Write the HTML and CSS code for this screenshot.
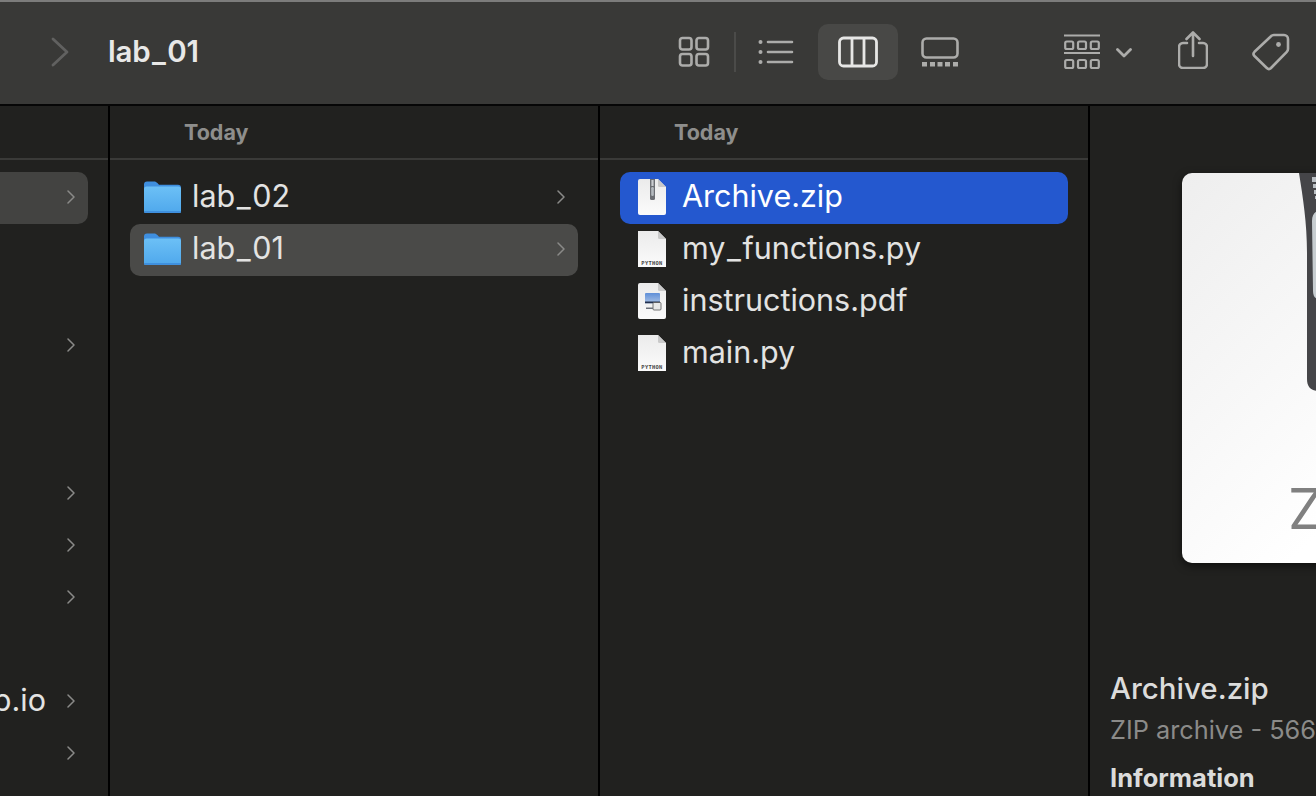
FILE: index.html
```html
<!DOCTYPE html>
<html lang="en">
<head>
<meta charset="utf-8">
<title>lab_01</title>
<link rel="stylesheet" href="styles.css">
</head>
<body>
<svg class="defs" width="0" height="0" aria-hidden="true">
  <defs>
    <linearGradient id="fold" x1="0" y1="0" x2="0" y2="1"><stop offset="0" stop-color="#6cc0f6"/><stop offset="1" stop-color="#4fa8ec"/></linearGradient>
    <linearGradient id="page" x1="0" y1="0" x2="0" y2="1"><stop offset="0" stop-color="#ebebeb"/><stop offset="1" stop-color="#fbfbfb"/></linearGradient>
    <linearGradient id="sky" x1="0" y1="0" x2="0" y2="1"><stop offset="0" stop-color="#5f8fd8"/><stop offset="1" stop-color="#c4d4ea"/></linearGradient>
    <symbol id="folder" viewBox="0 0 37 32">
      <path d="M0 3.500C0 1.500 1 .5 3 .5h7c1.600 0 2.400.6 3.400 1.600L15 3.800h19c2 0 3 1 3 3V10H0z" fill="#3f8fdf"/>
      <rect x="0" y="5.500" width="37" height="26.500" rx="2.600" fill="url(#fold)"/>
      <rect x="0" y="30" width="37" height="2" rx="1" fill="#3f90de"/>
    </symbol>
    <symbol id="zip" viewBox="0 0 28 36">
      <path d="M2 0h18l8 8v26a2 2 0 0 1-2 2H2a2 2 0 0 1-2-2V2a2 2 0 0 1 2-2z" fill="url(#page)"/>
      <path d="M20 0l8 8h-6.500a1.500 1.500 0 0 1-1.500-1.500z" fill="#c9c9c9"/>
      <path d="M12 0h5v19.500a1.500 1.500 0 0 1-1.500 1.500h-2a1.500 1.500 0 0 1-1.500-1.500z" fill="#6b6e73"/>
      <rect x="13.400" y="1" width="2.200" height="6" fill="#c9ccd0"/>
      <rect x="13.200" y="8" width="2.600" height="9" rx="1.200" fill="#b4babf"/>
    </symbol>
    <symbol id="py" viewBox="0 0 28 36">
      <path d="M0 0h20l8 8v28H0z" fill="url(#page)"/>
      <path d="M20 0l8 8h-6.500a1.500 1.500 0 0 1-1.500-1.500z" fill="#c9c9c9"/>
      <text x="14" y="33.500" text-anchor="middle" class="pytext">PYTHON</text>
    </symbol>
    <symbol id="pdf" viewBox="0 0 28 36">
      <path d="M2 0h18l8 8v26a2 2 0 0 1-2 2H2a2 2 0 0 1-2-2V2a2 2 0 0 1 2-2z" fill="url(#page)"/>
      <path d="M20 0l8 8h-6.500a1.500 1.500 0 0 1-1.500-1.500z" fill="#c9c9c9"/>
      <rect x="7" y="10" width="15" height="14" rx="1" fill="url(#sky)"/>
      <rect x="7" y="18.500" width="15" height="2" fill="#23304d"/>
      <rect x="7" y="20.500" width="10" height="3.500" fill="#f2f2f2"/>
      <rect x="15" y="19.500" width="8" height="7.500" rx="1" fill="#e8e8e8" stroke="#555" stroke-width=".8"/>
      <rect x="8" y="24.500" width="7" height="1.500" fill="#6a6f78"/>
    </symbol>
    <symbol id="chev" viewBox="0 0 8 14">
      <path d="M1 1l6 6-6 6" fill="none" stroke="#8a8a88" stroke-width="1.500" stroke-linecap="round" stroke-linejoin="round"/>
    </symbol>
  </defs>
</svg>

<header class="toolbar">
  <div class="nav-slot">
    <svg class="ic-back" width="18" height="30" viewBox="0 0 18 30"><path d="M2 2l14 13L2 28" fill="none" stroke="#616160" stroke-width="2.800" stroke-linecap="round" stroke-linejoin="round"/></svg>
  </div>
  <h1 class="title">lab<span class="us">_</span>01</h1>

  <div class="view-slot">
    <svg width="32" height="32" viewBox="0 0 32 32" class="ic"><rect x="2" y="2" width="11.500" height="11.500" rx="2.500"/><rect x="18.500" y="2" width="11.500" height="11.500" rx="2.500"/><rect x="2" y="18" width="11.500" height="11.500" rx="2.500"/><rect x="18.500" y="18" width="11.500" height="11.500" rx="2.500"/></svg>
  </div>
  <div class="view-sep"></div>
  <div class="view-slot">
    <svg width="36" height="26" viewBox="0 0 36 26" class="ic"><circle cx="2.500" cy="3" r="2" class="solid"/><circle cx="2.500" cy="13" r="2" class="solid"/><circle cx="2.500" cy="23" r="2" class="solid"/><path d="M10 3h24M10 13h24M10 23h24" stroke-linecap="round"/></svg>
  </div>
  <div class="view-slot view-on">
    <svg width="40" height="32" viewBox="0 0 40 32" class="ic ic-on"><rect x="1.500" y="2" width="37" height="28" rx="4"/><path d="M14 2v28M26 2v28"/></svg>
  </div>
  <div class="view-slot view-last">
    <svg width="38" height="30" viewBox="0 0 38 30" class="ic"><rect x="1.500" y="1.500" width="35" height="19" rx="4"/><path class="solid" d="M1 25h5v4.500H1zM9 25h5v4.500H9zM16.500 25h5v4.500h-5zM24 25h5v4.500h-5zM32 25h5v4.500h-5z"/></svg>
  </div>

  <div class="group-btn">
    <svg width="36" height="36" viewBox="0 0 36 36" class="ic ic-thin"><path d="M0 1.500h36M0 19h36"/><rect x="1.200" y="7.500" width="8" height="7.500" rx="1.500"/><rect x="14" y="7.500" width="8" height="7.500" rx="1.500"/><rect x="26.800" y="7.500" width="8" height="7.500" rx="1.500"/><rect x="1.200" y="26" width="8" height="8" rx="1.500"/><rect x="14" y="26" width="8" height="8" rx="1.500"/><rect x="26.800" y="26" width="8" height="8" rx="1.500"/></svg>
    <svg width="16" height="10" viewBox="0 0 16 10" class="ic ic-caret"><path d="M1.500 1.500L8 8l6.500-6.500" stroke-linecap="round" stroke-linejoin="round"/></svg>
  </div>
  <svg width="30" height="38" viewBox="0 0 30 38" class="ic ic-share"><path d="M9 12H5a4 4 0 0 0-4 4v17a4 4 0 0 0 4 4h20a4 4 0 0 0 4-4V16a4 4 0 0 0-4-4h-4" stroke-linecap="round"/><path d="M15 25V2M8.500 8L15 1.500 21.500 8" stroke-linecap="round" stroke-linejoin="round"/></svg>
  <svg width="38" height="38" viewBox="0 0 38 38" class="ic ic-tag"><path d="M22 2h10a4 4 0 0 1 4 4v10a4 4 0 0 1-1.200 2.800L19 35a3 3 0 0 1-4.200 0L2.500 23a3 3 0 0 1 0-4.200L19 3.200A4 4 0 0 1 22 2z" stroke-linejoin="round"/><circle cx="26.500" cy="11.500" r="2.400" class="solid"/></svg>
</header>

<main class="browser">
  <section class="col col-first">
    <div class="col-head"></div>
    <div class="rows">
      <div class="row row-side row-current"><span class="label"></span><svg class="chev"><use href="#chev"/></svg></div>
      <div class="group">
        <div class="row row-side"><span class="label"></span><svg class="chev"><use href="#chev"/></svg></div>
      </div>
      <div class="group">
        <div class="row row-side"><span class="label"></span><svg class="chev"><use href="#chev"/></svg></div>
        <div class="row row-side"><span class="label"></span><svg class="chev"><use href="#chev"/></svg></div>
        <div class="row row-side"><span class="label"></span><svg class="chev"><use href="#chev"/></svg></div>
        <div class="row row-side"><span class="label"></span></div>
        <div class="row row-side"><span class="label">lab.github.io</span><svg class="chev"><use href="#chev"/></svg></div>
        <div class="row row-side"><span class="label"></span><svg class="chev"><use href="#chev"/></svg></div>
      </div>
    </div>
  </section>

  <section class="col">
    <div class="col-head"><span class="head-text">Today</span></div>
    <div class="rows">
      <div class="row"><span class="slot slot-folder"><svg class="i-folder"><use href="#folder"/></svg></span><span class="label">lab<span class="us">_</span>02</span><svg class="chev"><use href="#chev"/></svg></div>
      <div class="row row-parent"><span class="slot slot-folder"><svg class="i-folder"><use href="#folder"/></svg></span><span class="label">lab<span class="us">_</span>01</span><svg class="chev"><use href="#chev"/></svg></div>
    </div>
  </section>

  <section class="col">
    <div class="col-head"><span class="head-text">Today</span></div>
    <div class="rows">
      <div class="row row-selected"><span class="slot"><svg class="i-file"><use href="#zip"/></svg></span><span class="label">Archive.zip</span></div>
      <div class="row"><span class="slot"><svg class="i-file"><use href="#py"/></svg></span><span class="label">my<span class="us">_</span>functions.py</span></div>
      <div class="row"><span class="slot"><svg class="i-file"><use href="#pdf"/></svg></span><span class="label">instructions.pdf</span></div>
      <div class="row"><span class="slot"><svg class="i-file"><use href="#py"/></svg></span><span class="label">main.py</span></div>
    </div>
  </section>

  <aside class="preview">
    <div class="card">
      <svg class="zipper" width="20" height="218" viewBox="0 0 20 218">
        <path d="M0 0h20v218c-8 0-12-4-12-12V80C8 50 4 25 0 0z" fill="#454548"/>
        <path d="M13 4h7v5h-7zM14 11h6v4h-6zM15 17h5v4h-5zM16 23h4v3h-4z" fill="#b9bec2"/>
        <path d="M20 38c-4 0-7 4-7 10l1 70c0 6 3 8 6 8z" fill="#c7cdd0"/>
      </svg>
      <span class="card-type">ZIP</span>
    </div>
    <h2 class="p-name">Archive.zip</h2>
    <p class="p-kind">ZIP archive - 566 KB</p>
    <h3 class="p-info">Information</h3>
  </aside>
</main>
</body>
</html>
```
FILE: styles.css
```css
* { box-sizing: border-box; }
html, body { margin: 0; padding: 0; height: 100%; }
body {
  width: 1316px;
  height: 796px;
  overflow: hidden;
  display: flex;
  flex-direction: column;
  background: #21211f;
  color: #e3e3e2;
  font-family: Inter, "Liberation Sans", sans-serif;
}
.defs { position: absolute; }
.pytext { font: 700 5.400px "DejaVu Sans Mono", monospace; fill: #444; letter-spacing: .3px; }
.us { padding: 0 1.600px; }

/* Toolbar */
.toolbar {
  flex: none;
  height: 106px;
  display: flex;
  align-items: center;
  padding: 0 26px 2px 40px;
  background: #393937;
  border-top: 2px solid #7c7c7b;
  border-bottom: 2px solid #060606;
}
.nav-slot { width: 40px; display: flex; justify-content: center; margin-right: 28px; }
.title { flex: 1; margin: 0 0 3px; font-size: 29.500px; font-weight: 600; color: #e8e8e7; letter-spacing: -.2px; }
.ic { fill: none; stroke: #acacaa; stroke-width: 2.600; flex: none; display: block; }
.ic .solid { fill: #acacaa; stroke: none; }
.ic-thin { stroke-width: 2.200; }
.ic-on { stroke: #e6e6e5; stroke-width: 2.800; }
.view-slot { width: 80px; height: 56px; border-radius: 10px; display: flex; align-items: center; justify-content: center; flex: none; }
.view-on { background: #484846; margin: 0 2px; }
.view-sep { width: 2px; height: 40px; background: #4b4b49; flex: none; }
.group-btn { display: flex; align-items: center; gap: 16px; margin-left: 84px; flex: none; }
.ic-caret { stroke-width: 2.800; margin-top: 2px; }
.ic-share { margin-left: 46px; margin-top: -4px; }
.ic-tag { margin-left: 44px; }

/* Columns */
.browser { flex: 1; display: flex; min-height: 0; }
.col { flex: none; width: 490px; border-right: 2px solid #000; display: flex; flex-direction: column; }
.col-first { width: 110px; overflow: hidden; }
.col-head {
  flex: none;
  height: 54px;
  padding-left: 74px;
  display: flex;
  align-items: center;
  border-bottom: 2px solid #3a3a38;
}
.head-text { font-size: 21.500px; font-weight: 700; color: #8e8e8c; }
.rows { padding: 12px 20px 0; display: flex; flex-direction: column; }
.group { margin-top: 96px; display: flex; flex-direction: column; }
.row { height: 52px; display: flex; align-items: center; border-radius: 10px; flex: none; padding-right: 13px; }
.slot { width: 64px; margin: 0 -2px 2px 0; display: flex; justify-content: center; flex: none; }
.label { flex: 1; font-size: 30.500px; white-space: nowrap; line-height: 48px; margin-bottom: 4px; }
.row-parent { background: #4a4a48; }
.row-selected { background: #2458cf; color: #fff; }
.i-folder { width: 37px; height: 32px; display: block; }
.i-file { width: 28px; height: 36px; display: block; }
.chev { width: 8px; height: 14px; flex: none; display: block; margin-bottom: 2px; }

/* First column is clipped on the left */
.col-first .rows { padding: 12px 20px 0 0; }
.row-side .label { min-width: 0; display: flex; justify-content: flex-end; overflow: hidden; padding-right: 21px; }
.row-current { background: #434341; border-radius: 0 10px 10px 0; }

/* Preview */
.preview { flex: 1; min-width: 0; overflow: hidden; padding: 67px 0 0 20px; display: flex; flex-direction: column; align-items: flex-start; }
.card {
  flex: none;
  width: 320px;
  height: 390px;
  margin-left: 72px;
  border-radius: 10px;
  background: linear-gradient(135deg, #eeeeee, #ffffff 70%);
  box-shadow: 0 3px 8px rgba(0, 0, 0, .55);
  position: relative;
  display: flex;
  align-items: flex-end;
  padding: 0 0 26px 106px;
}
.zipper { position: absolute; left: 117px; top: 0; }
.card-type { font-size: 56px; line-height: 1; font-weight: 400; color: #808080; }
.p-name { margin: 106px 0 0; font-size: 29.500px; line-height: 38px; font-weight: 500; color: #dcdcdb; white-space: nowrap; }
.p-kind { margin: 6px 0 0; font-size: 25.300px; line-height: 34px; color: #8b8b89; white-space: nowrap; }
.p-info { margin: 14px 0 0; font-size: 25.500px; line-height: 34px; font-weight: 700; color: #dcdcdb; white-space: nowrap; }
```
